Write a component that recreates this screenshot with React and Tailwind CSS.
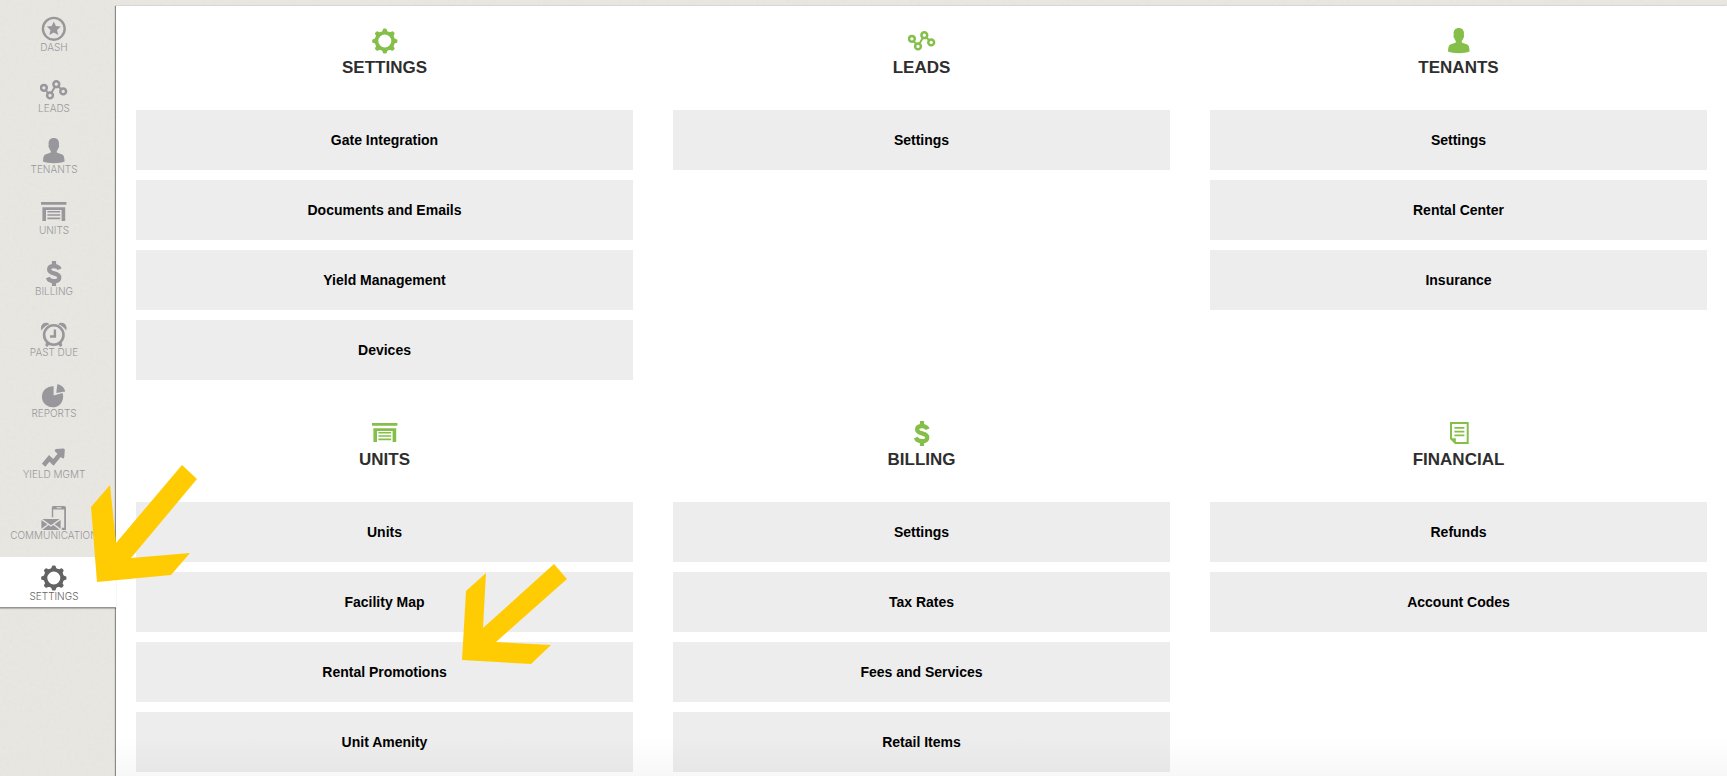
import React from 'react';
import clsx from 'clsx';

// All icons share one 28x26 box and take their colour from the text colour
const Icon = ({ children }) => (
  <svg width="28" height="26" viewBox="0 0 28 26" fill="none" className="block" aria-hidden="true">
    {children}
  </svg>
);

const DashIcon = () => (
  <Icon>
    <circle cx="13.8" cy="12.8" r="10.9" stroke="currentColor" strokeWidth="2.4" />
    <path
      d="M13.8 5.4l2.1 4.7 5 .5-3.8 3.4 1.1 5-4.4-2.6-4.4 2.6 1.1-5-3.8-3.4 5-.5z"
      fill="currentColor"
    />
  </Icon>
);

const LeadsIcon = () => (
  <Icon>
    <g stroke="currentColor" strokeWidth="2.5">
      <circle cx="3.9" cy="10.8" r="2.9" />
      <circle cx="10" cy="18.4" r="2.9" />
      <circle cx="16.3" cy="7.2" r="2.9" />
      <circle cx="23.2" cy="14.4" r="2.9" />
      <path d="M5.7 13.1l2.5 3M11.4 15.8l3.5-6.1M18.3 9.3l2.9 3" strokeWidth="2" />
    </g>
  </Icon>
);

const TenantsIcon = () => (
  <Icon>
    <path
      d="M13.8 0c3.3 0 5.2 2.2 5.2 5.5 0 .8-.1 1.3-.2 1.8.7.2.5 1.8-.5 2.9-.3 1.1-.8 2-1.5 2.7v1.6c1.4.9 3.8 1.1 5.5 1.900 1.900 1 2.200 4.200 2.300 7.200-2.600 1.200-6.400 1.700-10.800 1.700S5.600 24.800 3 23.600c.1-3 .4-6.200 2.300-7.200 1.700-.8 4.100-1 5.500-1.900v-1.600c-.7-.7-1.200-1.600-1.500-2.700-1-1.100-1.200-2.700-.5-2.900-.1-.5-.2-1-.2-1.800C8.600 2.200 10.500 0 13.800 0z"
      fill="currentColor"
    />
  </Icon>
);

const UnitsIcon = () => (
  <Icon>
    <path
      d="M1 3h25.400v2.700H1zM2.400 8.200h22.800V22h-3.600V11H6v11H2.400zM7.400 12h12.800v1.500H7.400zM7.400 15.200h12.800v1.600H7.400zM7.400 18.600h12.800v1.700H7.400z"
      fill="currentColor"
    />
  </Icon>
);

const BillingIcon = () => (
  <Icon>
    <g stroke="currentColor" strokeWidth="4.200">
      <path d="M19.600 9.300C18.800 7 16.800 6.200 14 6.200c-3 0-4.900 1.200-4.900 3.300 0 5.300 10.200 2.500 10.200 8 0 2.400-2.200 3.700-5.200 3.700-3.200 0-5.400-1.200-6.200-3.700" />
      <path d="M14 1v5M14 21v5" />
    </g>
  </Icon>
);

const PastDueIcon = () => (
  <Icon>
    <circle cx="13.800" cy="14" r="9.700" stroke="currentColor" strokeWidth="2.600" />
    <path d="M14.900 8.600v6.900H10" stroke="currentColor" strokeWidth="2.400" />
    <path
      d="M1.400 9.400C0 5 2.600 1.800 6 1.800c1.400 0 2.600.5 3.300 1.400C6 4.400 3.400 6.600 1.400 9.400zM26.200 9.400C27.600 5 25 1.800 21.600 1.800c-1.400 0-2.600.5-3.300 1.400 3.300 1.200 5.900 3.400 7.900 6.200z"
      fill="currentColor"
    />
    <path d="M7.600 22l-.6 2M20 22l.6 2" stroke="currentColor" strokeWidth="3.200" strokeLinecap="round" />
  </Icon>
);

const ReportsIcon = () => (
  <Icon>
    <path d="M13.600 4.200v9.200l8.900-2.300A10.600 10.600 0 1 1 13.600 4.200z" fill="currentColor" />
    <path d="M16.300 11l1-8.800c4 .5 6.900 3.200 7.900 7.200z" fill="currentColor" />
  </Icon>
);

const YieldIcon = () => (
  <Icon>
    <path d="M3.600 22.200l5.600-6.900 4.200 4.100 7.400-9" stroke="currentColor" strokeWidth="4.600" />
    <path d="M14.800 8.200q-.6-1.800 1.400-2.100l7.200-.7q1.500 0 1.400 1.500l-.5 7.200q-.3 2-2 1.200z" fill="currentColor" />
  </Icon>
);

const CommunicationIcon = () => (
  <Icon>
    <path
      fillRule="evenodd"
      d="M13.600 2h10.600c1 0 1.800.8 1.800 1.800v21.600c0 .9-.8 1.600-1.800 1.600h-2.400v-3.200h2.400V5.400H13.200v7.800h-1.400V3.800c0-1 .8-1.800 1.800-1.800zm3 1.200v1h4.600v-1z"
      fill="currentColor"
    />
    <path
      d="M2.400 15h17.200L11 21.200zM1.400 15.900l6 4.300-6 4.600zM20.600 15.900v8.900l-6-4.600zM8.500 21l2.500 1.800 2.500-1.800 6.200 5H2.300z"
      fill="currentColor"
    />
  </Icon>
);

const GearIcon = () => (
  <Icon>
    <circle cx="13.800" cy="13" r="8.300" stroke="currentColor" strokeWidth="3.600" />
    {[0, 45, 90, 135, 180, 225, 270, 315].map((angle) => (
      <path
        key={angle}
        d="M10.200 4.200q1.300-.7 1.500-2.300.2-1.500 1.200-1.500h1.800q1 0 1.200 1.500.2 1.600 1.500 2.300z"
        fill="currentColor"
        transform={`rotate(${angle} 13.8 13)`}
      />
    ))}
  </Icon>
);

const FinancialIcon = () => (
  <Icon>
    <path d="M10.400 23.100h12.300V3H6v15.600z" stroke="currentColor" strokeWidth="2" />
    <path d="M5.200 18.300h5.600V24z" fill="currentColor" />
    <path d="M9.400 7.800h10M9.400 11.600h10M9.400 15.400h10" stroke="currentColor" strokeWidth="1.700" />
  </Icon>
);

const navItems = [
  { label: 'Dash', icon: DashIcon },
  { label: 'Leads', icon: LeadsIcon },
  { label: 'Tenants', icon: TenantsIcon },
  { label: 'Units', icon: UnitsIcon },
  { label: 'Billing', icon: BillingIcon },
  { label: 'Past Due', icon: PastDueIcon },
  { label: 'Reports', icon: ReportsIcon },
  { label: 'Yield Mgmt', icon: YieldIcon },
  { label: 'Communication', icon: CommunicationIcon },
  { label: 'Settings', icon: GearIcon, active: true },
];

const sections = [
  {
    title: 'Settings',
    icon: GearIcon,
    links: ['Gate Integration', 'Documents and Emails', 'Yield Management', 'Devices'],
  },
  { title: 'Leads', icon: LeadsIcon, links: ['Settings'] },
  { title: 'Tenants', icon: TenantsIcon, links: ['Settings', 'Rental Center', 'Insurance'] },
  {
    title: 'Units',
    icon: UnitsIcon,
    links: ['Units', 'Facility Map', 'Rental Promotions', 'Unit Amenity'],
  },
  {
    title: 'Billing',
    icon: BillingIcon,
    links: ['Settings', 'Tax Rates', 'Fees and Services', 'Retail Items'],
  },
  { title: 'Financial', icon: FinancialIcon, links: ['Refunds', 'Account Codes'] },
];

// Faint paper grain behind the sidebar and the top strip
const PaperTexture = () => (
  <svg className="absolute inset-0 h-full w-full opacity-5" aria-hidden="true">
    <filter id="paper">
      <feTurbulence type="fractalNoise" baseFrequency="0.3" numOctaves="3" seed="4" />
      <feColorMatrix type="saturate" values="0" />
    </filter>
    <rect width="100%" height="100%" filter="url(#paper)" />
  </svg>
);

const NavItem = ({ label, icon: NavIcon, active }) => (
  <li className="relative mb-[10px]">
    <a
      href="#"
      aria-current={active ? 'page' : undefined}
      className={clsx(
        'flex h-[51px] flex-col items-center pt-2 pr-2',
        active
          ? 'border-b border-[#949494] bg-white text-[#636363] shadow-[0_1px_1px_rgba(0,0,0,0.2)]'
          : 'text-[#98979b]'
      )}
    >
      <NavIcon />
      <span className="font-[Inter,sans-serif] text-[10px] leading-[11px] font-light whitespace-nowrap uppercase">
        {label}
      </span>
    </a>
    {active && (
      <svg
        width="107"
        height="118"
        viewBox="0 0 107 118"
        className="pointer-events-none absolute bottom-[25px] left-[91px] z-20"
        aria-hidden="true"
      >
        <path d="M91 0l15 14-66 79 59-5-19 22-74 7-6-75 19-22 6 58z" fill="#ffcc04" />
      </svg>
    )}
  </li>
);

const Section = ({ title, icon: SectionIcon, links }) => (
  <section className="px-5">
    <header className="flex flex-col items-center pt-[22px] pb-7">
      <span className="text-[#85bf4a]">
        <SectionIcon />
      </span>
      <h2 className="text-[17px] leading-7 font-bold text-[#2e2e2e] uppercase">{title}</h2>
    </header>
    <ul className="flex flex-col gap-[10px]">
      {links.map((link) => (
        <li key={link} className="relative">
          <a
            href="#"
            className="flex h-[60px] items-center justify-center bg-[#ededed] text-sm font-bold text-black"
          >
            {link}
          </a>
          {link === 'Rental Promotions' && (
            <svg
              width="106"
              height="100"
              viewBox="0 0 106 100"
              className="pointer-events-none absolute bottom-[38px] left-1/2 z-20 ml-[77px]"
              aria-hidden="true"
            >
              <path d="M92 0l13 15-71 63 55 3-20 19-69-4 4-69 20-18-3 55z" fill="#ffcc04" />
            </svg>
          )}
        </li>
      ))}
    </ul>
  </section>
);

export default function App() {
  return (
    <div className="relative flex min-h-screen bg-[#e8e7e2] pt-[6px] font-['Liberation_Sans',Arial,sans-serif]">
      <PaperTexture />
      <nav className="relative z-10 w-[116px] shrink-0 pt-[2px]">
        <ul>
          {navItems.map((item) => (
            <NavItem key={item.label} {...item} />
          ))}
        </ul>
      </nav>
      <main className="relative flex-1 bg-white shadow-[-1px_0_1px_rgba(0,0,0,0.4)]">
        <div className="grid grid-cols-3 gap-y-[18px]">
          {sections.map((section) => (
            <Section key={section.title} {...section} />
          ))}
        </div>
        <div className="pointer-events-none absolute inset-x-0 bottom-0 h-10 bg-linear-to-b from-transparent to-black/3" />
      </main>
    </div>
  );
}
